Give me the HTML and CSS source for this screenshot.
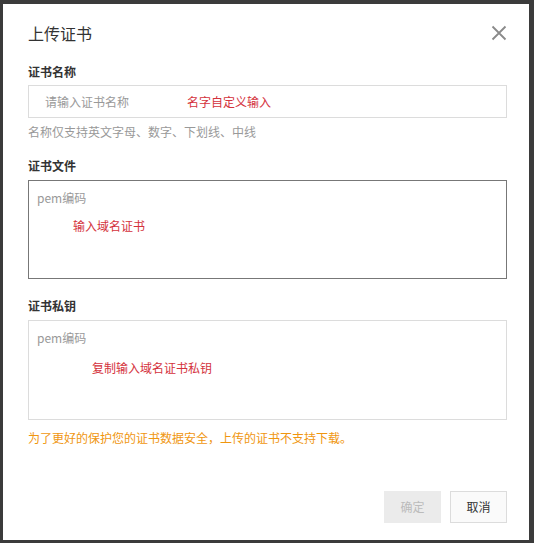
FILE: index.html
```html
<!DOCTYPE html>
<html lang="zh">
<head>
<meta charset="utf-8">
<title>上传证书</title>
<link rel="stylesheet" href="styles.css">
</head>
<body>
<div class="dialog">
  <div class="header">
    <div class="title">上传证书</div>
    <svg class="close" width="16" height="16" viewBox="0 0 16 16"><path d="M1.5 1.5 L14.5 14.5 M14.5 1.5 L1.5 14.5" stroke="#8a8a8a" stroke-width="1.8" fill="none"/></svg>
  </div>

  <div class="label first">证书名称</div>
  <div class="input">
    <span class="placeholder">请输入证书名称</span>
    <span class="note note-name">名字自定义输入</span>
  </div>
  <div class="hint">名称仅支持英文字母、数字、下划线、中线</div>

  <div class="label">证书文件</div>
  <div class="area focused">
    <div class="placeholder">pem编码</div>
    <div class="note note-cert">输入域名证书</div>
  </div>

  <div class="label third">证书私钥</div>
  <div class="area tall">
    <div class="placeholder">pem编码</div>
    <div class="note note-key">复制输入域名证书私钥</div>
  </div>
  <div class="warn">为了更好的保护您的证书数据安全，上传的证书不支持下载。</div>

  <div class="footer">
    <div class="btn disabled">确定</div>
    <div class="btn">取消</div>
  </div>
</div>
</body>
</html>
```

FILE: styles.css
```css
html, body {
  margin: 0;
  padding: 0;
  background: #3b3b3b;
}
body {
  font-family: "Noto Sans CJK SC", "Microsoft YaHei", "Liberation Sans", sans-serif;
  font-size: 12px;
  color: #333;
}
.dialog {
  box-sizing: border-box;
  width: 526px;
  height: 536px;
  margin: 4px 0 0 3px;
  background: #fff;
  padding: 0 22px 0 25px;
}
.header {
  display: flex;
  justify-content: space-between;
  align-items: center;
  padding-top: 16px;
  height: 26px;
}
.title {
  font-size: 16px;
  line-height: 26px;
  color: #333;
}
.close {
  display: block;
}
.label {
  font-weight: bold;
  line-height: 18px;
  color: #333;
  margin-top: 16px;
}
.label.first {
  margin-top: 17px;
}
.label.third {
  margin-top: 18px;
}
.input {
  box-sizing: border-box;
  height: 33px;
  margin-top: 4px;
  border: 1px solid #dcdcdc;
  display: flex;
  align-items: center;
  padding-left: 16px;
}
.placeholder {
  color: #999;
  line-height: 18px;
}
.note {
  color: #d4323c;
  line-height: 18px;
}
.note-name {
  margin-left: 58px;
}
.hint {
  color: #999;
  line-height: 18px;
  margin-top: 5px;
}
.area {
  box-sizing: border-box;
  height: 99px;
  margin-top: 5px;
  border: 1px solid #dcdcdc;
  padding: 8px 8px;
}
.area.tall {
  height: 100px;
}
.area.focused {
  border-color: #777;
}
.note-cert {
  margin-top: 10px;
  padding-left: 36px;
}
.note-key {
  margin-top: 12px;
  padding-left: 55px;
}
.warn {
  color: #f0960f;
  line-height: 18px;
  margin-top: 9px;
}
.footer {
  display: flex;
  justify-content: flex-end;
  gap: 9px;
  margin-top: 44px;
}
.btn {
  box-sizing: border-box;
  width: 57px;
  height: 32px;
  line-height: 30px;
  text-align: center;
  border: 1px solid #dcdcdc;
  background: #fafafa;
  color: #333;
}
.btn.disabled {
  background: #ebebeb;
  border-color: #ebebeb;
  color: #bbb;
}
```
